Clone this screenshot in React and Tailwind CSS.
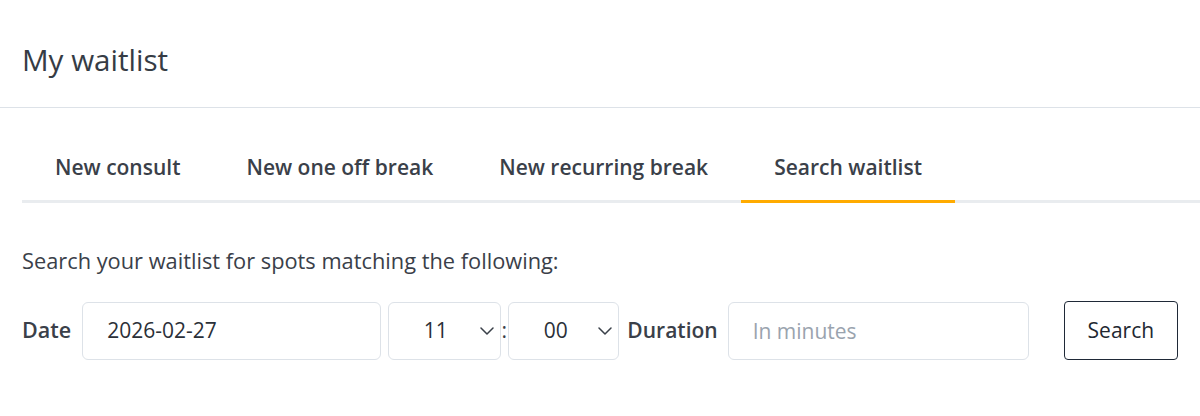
const font = { fontFamily: "'Open Sans', 'Noto Sans', sans-serif" };

const tabs = ["New consult", "New one off break", "New recurring break", "Search waitlist"];

const Chevron = () => (
    <svg width="14" height="8" viewBox="0 0 14 8" fill="none" className="text-[#3a4049]">
        <path d="M1 1 L7 7 L13 1" stroke="currentColor" strokeWidth="1.5" strokeLinecap="round" strokeLinejoin="round" />
    </svg>
);

const TimeSelect = ({ value, width }) => (
    <div
        className={`flex items-center justify-between h-[58px] border border-[#dde2e8] rounded-[6px] bg-white pl-[35px] pr-[6px] ${width}`}
    >
        <span className="text-[21px] text-[#2b3038]">{value}</span>
        <Chevron />
    </div>
);

export default function App() {
    return (
        <div className="w-[1200px] h-[416px] bg-white text-[#363c45]" style={font}>
            {/* Header */}
            <div className="h-[108px] flex items-center px-[22px] pt-[12px] border-b border-[#dde2e8]">
                <h1 className="text-[29.6px] leading-none font-medium text-[#363c45]">My waitlist</h1>
            </div>

            {/* Tabs */}
            <div className="ml-[22px] mt-[45px] flex border-b-[3px] border-[#e9ecef]">
                {tabs.map((t, i) => (
                    <div
                        key={t}
                        className={
                            i === 3
                                ? "px-[33px] pb-[19px] text-[21px] leading-[28px] font-semibold text-[#3a4049] -mb-[3px] border-b-[3px] border-[#ffab00]"
                                : "px-[33px] pb-[19px] text-[21px] leading-[28px] font-semibold text-[#3a4049]"
                        }
                    >
                        {t}
                    </div>
                ))}
            </div>

            {/* Search form */}
            <div className="px-[22px]">
                <p className="mt-[45px] text-[21.8px] leading-[26px] text-[#3a4049]">
                    Search your waitlist for spots matching the following:
                </p>

                <div className="mt-[27px] flex items-center">
                    <label className="text-[21.5px] font-semibold text-[#3a4049]">Date</label>
                    <div className="ml-[11px] w-[300px] h-[58px] flex items-center border border-[#dde2e8] rounded-[6px] px-[24px]">
                        <span className="text-[21px] text-[#2b3038]">2026-02-27</span>
                    </div>
                    <div className="ml-[7px]">
                        <TimeSelect value="11" width="w-[113px]" />
                    </div>
                    <span className="w-[7px] text-center text-[21px] text-[#3a4049]">:</span>
                    <TimeSelect value="00" width="w-[112px]" />
                    <label className="ml-[8px] text-[21px] font-semibold text-[#3a4049]">Duration</label>
                    <input
                        className="ml-[10px] w-[301px] h-[58px] border border-[#dde2e8] rounded-[6px] px-[24px] text-[21px] placeholder:text-[#9aa3ae] outline-none"
                        placeholder="In minutes"
                    />
                    <button className="ml-[35px] w-[115px] h-[59px] border-[1.5px] border-[#1f2937] rounded-[4px] text-[21px] text-[#222831] bg-white">
                        Search
                    </button>
                </div>
            </div>
        </div>
    );
}
